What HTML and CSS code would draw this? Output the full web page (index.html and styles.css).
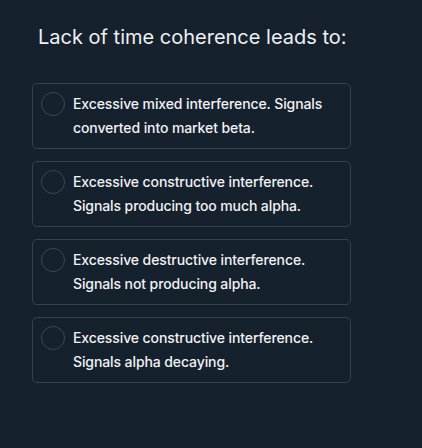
FILE: index.html
```html
<!DOCTYPE html>
<html lang="en">
<head>
<meta charset="utf-8">
<title>Quiz</title>
<link rel="stylesheet" href="styles.css">
</head>
<body>
<main class="quiz">
  <h1 class="question">Lack of time coherence leads to:</h1>
  <div class="options">
    <label class="option"><span class="radio"></span><span class="option-text">Excessive mixed interference. Signals converted into market beta.</span></label>
    <label class="option"><span class="radio"></span><span class="option-text">Excessive constructive interference. Signals producing too much alpha.</span></label>
    <label class="option"><span class="radio"></span><span class="option-text">Excessive destructive interference. Signals not producing alpha.</span></label>
    <label class="option"><span class="radio"></span><span class="option-text">Excessive constructive interference. Signals alpha decaying.</span></label>
  </div>
</main>
</body>
</html>
```
FILE: styles.css
```css
html, body {
  margin: 0;
  padding: 0;
  background: #16212e;
}
body {
  font-family: Inter, "Noto Sans", "Liberation Sans", sans-serif;
  color: #f1f2f4;
  width: 422px;
  height: 448px;
  overflow: hidden;
}
.quiz {
  padding: 23px 0 0 32px;
  width: 319px;
}
.question {
  margin: 0 0 32px 6px;
  font-size: 20px;
  line-height: 28px;
  font-weight: 400;
  color: #eef0f2;
}
.options {
  display: flex;
  flex-direction: column;
  gap: 12px;
}
.option {
  display: flex;
  align-items: flex-start;
  gap: 8px;
  padding: 8px;
  border: 1px solid #36424f;
  border-radius: 5px;
}
.radio {
  flex: none;
  width: 22px;
  height: 22px;
  border: 1px solid #3b4754;
  border-radius: 50%;
}
.option-text {
  font-size: 14px;
  line-height: 24px;
  font-weight: 500;
  letter-spacing: -0.1px;
}
```
